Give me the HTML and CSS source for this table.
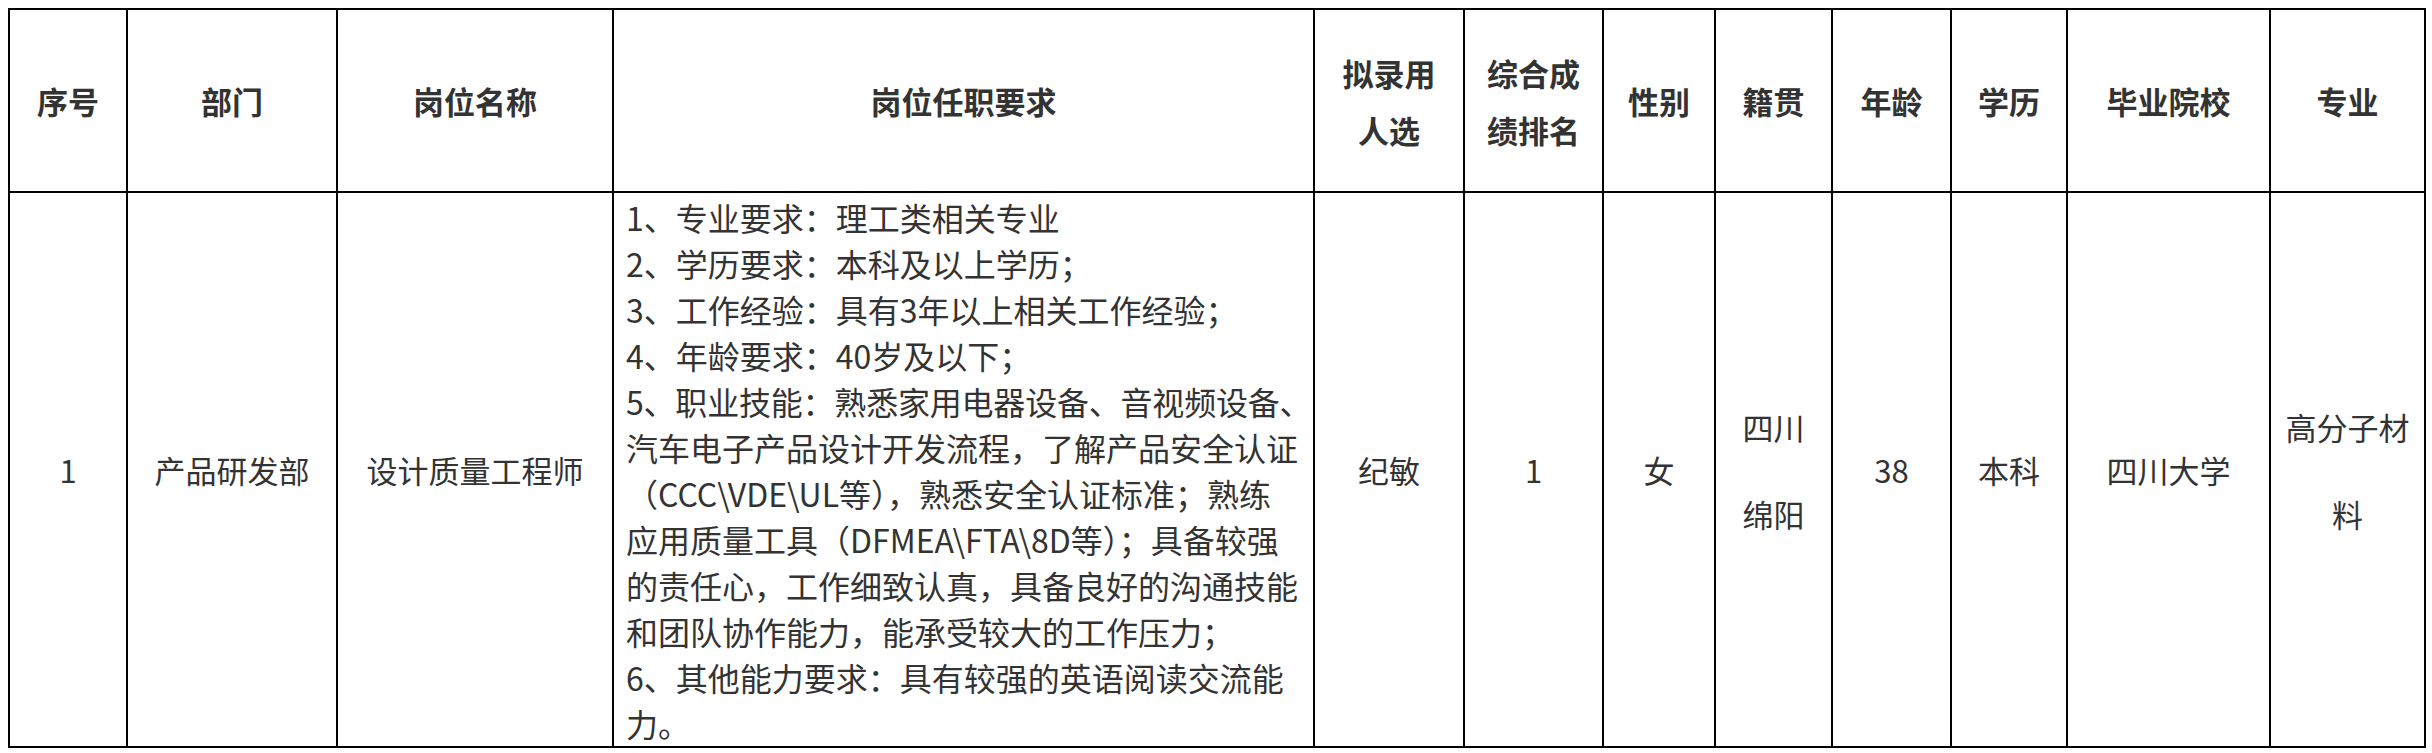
FILE: index.html
```html
<!DOCTYPE html>
<html lang="zh-CN">
<head>
<meta charset="utf-8">
<title>拟录用人选公示</title>
<link rel="stylesheet" href="styles.css">
</head>
<body>
<table class="grid">
  <colgroup>
    <col class="c-no"><col class="c-dept"><col class="c-post"><col class="c-req">
    <col class="c-name"><col class="c-rank"><col class="c-sex"><col class="c-home">
    <col class="c-age"><col class="c-edu"><col class="c-school"><col class="c-major">
  </colgroup>
  <thead>
    <tr class="head-row">
      <th>序号</th>
      <th>部门</th>
      <th>岗位名称</th>
      <th>岗位任职要求</th>
      <th class="two">拟录用<br>人选</th>
      <th class="two">综合成<br>绩排名</th>
      <th>性别</th>
      <th>籍贯</th>
      <th>年龄</th>
      <th>学历</th>
      <th>毕业院校</th>
      <th>专业</th>
    </tr>
  </thead>
  <tbody>
    <tr class="body-row">
      <td>1</td>
      <td>产品研发部</td>
      <td>设计质量工程师</td>
      <td class="req">
        <div class="ln">1、专业要求：理工类相关专业</div>
        <div class="ln">2、学历要求：本科及以上学历；</div>
        <div class="ln">3、工作经验：具有3年以上相关工作经验；</div>
        <div class="ln">4、年龄要求：40岁及以下；</div>
        <div class="ln tight">5、职业技能：熟悉家用电器设备、音视频设备、</div>
        <div class="ln">汽车电子产品设计开发流程，了解产品安全认证</div>
        <div class="ln">（CCC\VDE\UL等），熟悉安全认证标准；熟练</div>
        <div class="ln">应用质量工具（DFMEA\FTA\8D等）；具备较强</div>
        <div class="ln">的责任心，工作细致认真，具备良好的沟通技能</div>
        <div class="ln">和团队协作能力，能承受较大的工作压力；</div>
        <div class="ln">6、其他能力要求：具有较强的英语阅读交流能</div>
        <div class="ln">力。</div>
      </td>
      <td>纪敏</td>
      <td>1</td>
      <td>女</td>
      <td class="wide">四川<br>绵阳</td>
      <td>38</td>
      <td>本科</td>
      <td>四川大学</td>
      <td class="wide">高分子材<br>料</td>
    </tr>
  </tbody>
</table>
</body>
</html>
```

FILE: styles.css
```css
html, body {
  margin: 0;
  padding: 0;
  background: #ffffff;
}

body {
  padding: 8px;
  font-family: "Noto Sans CJK SC", "Microsoft YaHei", "Noto Sans", sans-serif;
  color: #333333;
}

.grid {
  width: 2416px;
  table-layout: fixed;
  border-collapse: collapse;
}

.grid th,
.grid td {
  border: 2px solid #000000;
  text-align: center;
  vertical-align: middle;
  padding: 0 6px;
}

.c-no { width: 118px; }
.c-dept { width: 210px; }
.c-post { width: 276px; }
.c-req { width: 701px; }
.c-name { width: 150px; }
.c-rank { width: 139px; }
.c-sex { width: 112px; }
.c-home { width: 117px; }
.c-age { width: 119px; }
.c-edu { width: 116px; }
.c-school { width: 203px; }
.c-major { width: 155px; }

.head-row {
  height: 183px;
}

.head-row th {
  font-size: 31px;
  font-weight: 700;
  line-height: 40px;
  color: #333333;
}

.head-row th.two {
  line-height: 57px;
}

.body-row {
  height: 555px;
}

.body-row td {
  font-size: 31px;
  font-weight: 400;
  line-height: 40px;
}

.body-row td.req {
  text-align: left;
  padding: 0 0 0 12px;
  font-size: 32px;
  line-height: 46px;
}

.ln {
  white-space: nowrap;
}

.ln.tight {
  letter-spacing: -0.2px;
}

.body-row td.wide {
  line-height: 87px;
}
```
